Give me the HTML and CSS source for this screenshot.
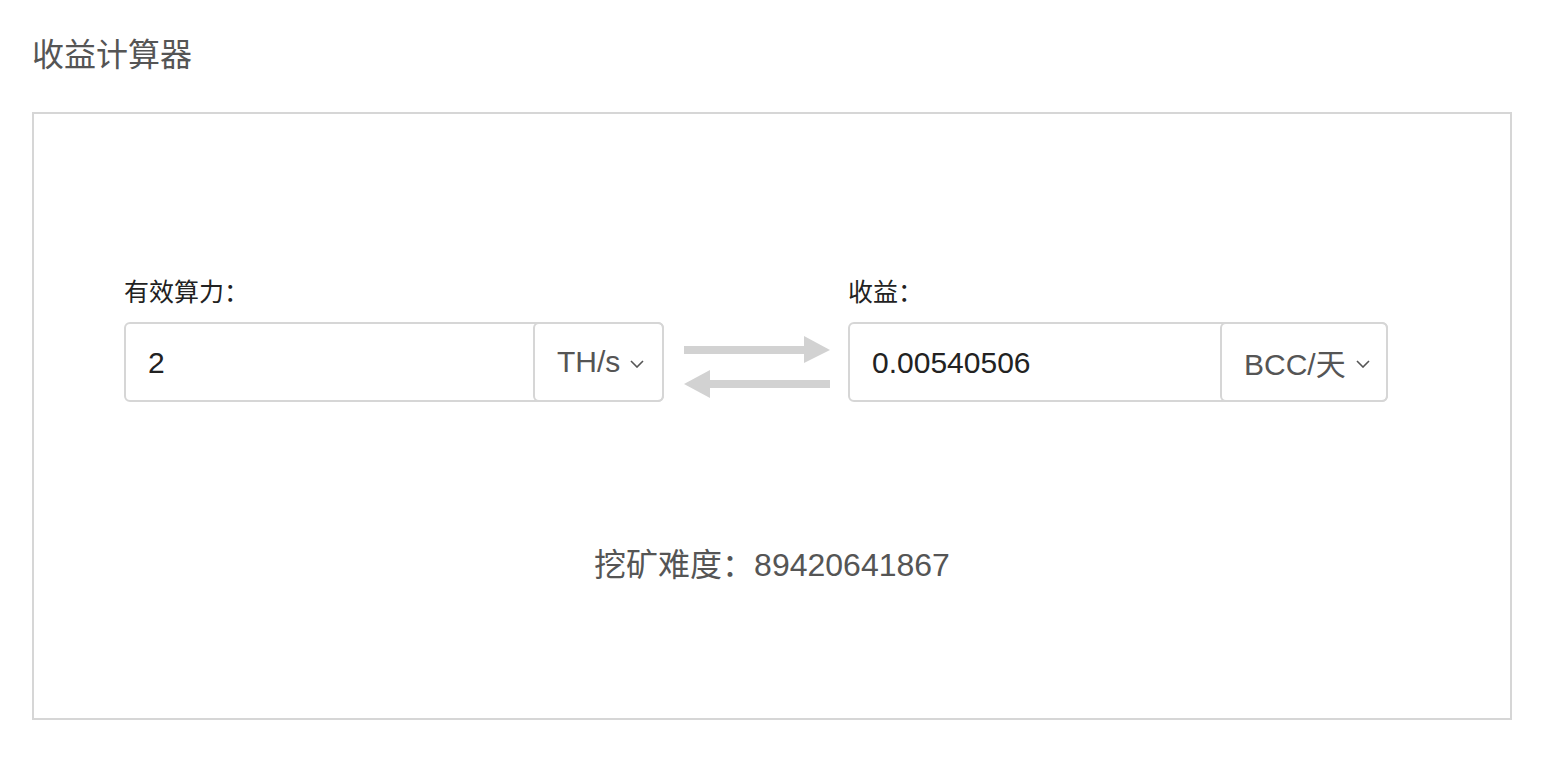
FILE: index.html
```html
<!DOCTYPE html>
<html lang="zh-CN">
<head>
    <meta charset="UTF-8">
    <meta name="viewport" content="width=device-width, initial-scale=1.0">
    <title>收益计算器</title>
    <link rel="stylesheet" href="styles.css">
</head>
<body>
    <h1 class="title">收益计算器</h1>

    <div class="calculator">
        <div class="fields">
            <div class="field">
                <label class="label" for="hashrate">有效算力：</label>
                <div class="group">
                    <input class="value" id="hashrate" type="text" value="2">
                    <div class="unit">
                        <span>TH/s</span>
                        <svg class="caret" width="14" height="8" viewBox="0 0 14 8"><path d="M1 1 L7 7 L13 1" fill="none" stroke="#555" stroke-width="1.6"/></svg>
                    </div>
                </div>
            </div>

            <svg class="swap" width="146" height="62" viewBox="0 0 146 62">
                <rect x="0" y="10" width="122" height="8" fill="#d2d2d2"/>
                <polygon points="120,0 146,14 120,27" fill="#d2d2d2"/>
                <rect x="24" y="44" width="122" height="8" fill="#d2d2d2"/>
                <polygon points="26,34 0,48 26,62" fill="#d2d2d2"/>
            </svg>

            <div class="field">
                <label class="label" for="income">收益：</label>
                <div class="group">
                    <input class="value" id="income" type="text" value="0.00540506">
                    <div class="unit unit-wide">
                        <span>BCC/天</span>
                        <svg class="caret" width="14" height="8" viewBox="0 0 14 8"><path d="M1 1 L7 7 L13 1" fill="none" stroke="#555" stroke-width="1.6"/></svg>
                    </div>
                </div>
            </div>
        </div>

        <p class="difficulty">挖矿难度：89420641867</p>
    </div>
</body>
</html>
```

FILE: styles.css
```css
body {
    font-family: 'Liberation Sans', 'Noto Sans CJK SC', sans-serif;
    margin: 0;
    padding: 0 32px;
    background-color: #fff;
}
.title {
    font-size: 32px;
    font-weight: normal;
    color: #555;
    line-height: 40px;
    margin: 35px 0 37px 0;
}
.calculator {
    width: 1480px;
    height: 608px;
    box-sizing: border-box;
    border: 2px solid #d6d6d6;
    padding: 163px 0 0 90px;
}
.fields {
    display: flex;
    align-items: flex-end;
}
.field {
    width: 540px;
}
.label {
    display: block;
    font-size: 25px;
    line-height: 30px;
    color: #222;
    margin-bottom: 15px;
}
.group {
    display: flex;
    height: 80px;
    box-sizing: border-box;
    border: 2px solid #d6d6d6;
    border-radius: 6px;
}
.value {
    flex: 1;
    min-width: 0;
    border: none;
    outline: none;
    background: transparent;
    padding: 2px 0 0 22px;
    font-family: 'Liberation Sans', 'Noto Sans CJK SC', sans-serif;
    font-size: 30px;
    color: #222;
}
.unit {
    display: flex;
    align-items: center;
    gap: 10px;
    width: 131px;
    box-sizing: border-box;
    margin: -2px -2px -2px 0;
    padding: 0 0 0 22px;
    border: 2px solid #d6d6d6;
    border-radius: 6px;
    font-size: 30px;
    color: #555;
    cursor: pointer;
}
.unit-wide {
    width: 168px;
}
.caret {
    margin-top: 3px;
}
.swap {
    margin: 0 18px 4px 20px;
    flex-shrink: 0;
}
.difficulty {
    font-size: 32px;
    line-height: 40px;
    color: #555;
    text-align: center;
    margin: 143px 90px 0 0;
}
```
